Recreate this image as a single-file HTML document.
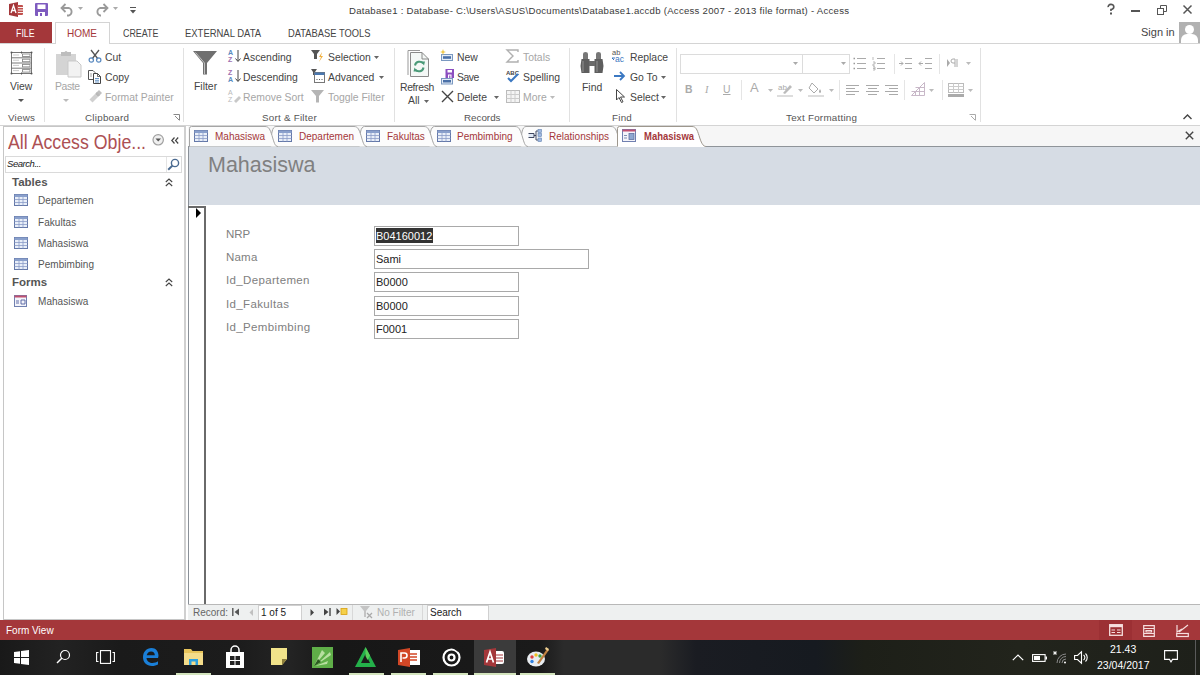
<!DOCTYPE html>
<html><head><meta charset="utf-8">
<style>
*{box-sizing:border-box}
html,body{margin:0;padding:0}
body{width:1200px;height:675px;position:relative;overflow:hidden;background:#fff;font-family:"Liberation Sans",sans-serif;color:#444}
.a{position:absolute;white-space:nowrap}
.t{position:absolute;white-space:nowrap;font-size:10.5px;line-height:12px;color:#444}
.dis{color:#a6a6a6}
.gl{position:absolute;font-size:9.8px;line-height:12px;color:#555;white-space:nowrap;letter-spacing:0.25px}
.sep{position:absolute;width:1px;background:#e1e1e1}
svg{position:absolute;overflow:visible}
</style></head><body>

<!-- ===== TITLE BAR ===== -->
<div id="titlebar" class="a" style="left:0;top:0;width:1200px;height:22px;background:#fff"></div>
<div class="t" style="left:349px;top:5px;font-size:9.6px;letter-spacing:0.26px;color:#3a3a3a">Database1 : Database- C:\Users\ASUS\Documents\Database1.accdb (Access 2007 - 2013 file format) - Access</div>


<svg style="left:9px;top:2px" width="15" height="15" viewBox="0 0 15 15">
 <path d="M0 2L9 0V15L0 13Z" fill="#a4373a"/>
 <rect x="8" y="3" width="6" height="10" rx="1" fill="#c0504d"/>
 <path d="M9 5.5H14M9 8H14M9 10.5H14" stroke="#fff" stroke-width="0.9"/>
 <path d="M2 11L4.5 3.5L7 11M3 8.5H6" stroke="#fff" stroke-width="1.3" fill="none"/>
</svg>
<svg style="left:35px;top:3px" width="13" height="13" viewBox="0 0 13 13">
 <rect x="0" y="0" width="13" height="13" rx="1" fill="#7e5bbf"/>
 <rect x="2.5" y="1.5" width="8" height="4.5" fill="#fff"/>
 <rect x="3" y="9" width="7" height="4" fill="#fff"/><rect x="5" y="10" width="2" height="3" fill="#7e5bbf"/>
</svg>
<svg style="left:60px;top:3px" width="14" height="13" viewBox="0 0 14 13">
 <path d="M2 5H9A4 4 0 0 1 9 12.5H7" fill="none" stroke="#9a9a9a" stroke-width="1.8"/>
 <path d="M5.5 1L1.5 5L5.5 9" fill="none" stroke="#9a9a9a" stroke-width="1.8"/>
</svg>
<svg style="left:78px;top:7px" width="5" height="3"><path d="M0 0H5L2.5 3Z" fill="#aaa"/></svg>
<svg style="left:95px;top:3px" width="14" height="13" viewBox="0 0 14 13">
 <path d="M12 5H5A4 4 0 0 0 5 12.5H6" fill="none" stroke="#9a9a9a" stroke-width="1.8"/>
 <path d="M8.5 1L12.5 5L8.5 9" fill="none" stroke="#9a9a9a" stroke-width="1.8"/>
</svg>
<svg style="left:113px;top:7px" width="5" height="3"><path d="M0 0H5L2.5 3Z" fill="#aaa"/></svg>
<svg style="left:130px;top:7px" width="6" height="7" viewBox="0 0 6 7"><path d="M0 0.5H6" stroke="#555"/><path d="M0 3H6L3 6.5Z" fill="#555"/></svg>

<svg style="left:1107px;top:4px" width="8" height="11" viewBox="0 0 8 11">
 <path d="M1.2 3.2A2.8 2.6 0 1 1 4 5.5V7" fill="none" stroke="#555" stroke-width="1.7"/><rect x="3" y="8.5" width="2" height="2" fill="#555"/>
</svg>
<div class="a" style="left:1131px;top:10px;width:9px;height:2px;background:#555"></div>
<svg style="left:1157px;top:5px" width="10" height="10" viewBox="0 0 10 10">
 <rect x="0.5" y="3.5" width="6" height="6" fill="none" stroke="#555"/><path d="M3.5 3.5V0.5H9.5V6.5H6.5" fill="none" stroke="#555"/>
</svg>
<svg style="left:1183px;top:5px" width="9" height="9" viewBox="0 0 9 9"><path d="M0.5 0.5L8.5 8.5M8.5 0.5L0.5 8.5" stroke="#555" stroke-width="1.5"/></svg>

<!-- ===== RIBBON TABS ===== -->
<div class="a" style="left:0;top:22px;width:52px;height:22px;background:#a4373a"></div>
<div class="t" style="left:16px;top:26px;color:#fff;font-size:11px;line-height:14px;transform:scaleX(0.8);transform-origin:0 0">FILE</div>
<div class="a" style="left:55px;top:22px;width:55px;height:22px;border:1px solid #d4d4d4;border-bottom:none;background:#fff"></div>
<div class="t" style="left:67px;top:26px;color:#a4373a;font-size:11px;line-height:14px;transform:scaleX(0.91);transform-origin:0 0">HOME</div>
<div class="t" style="left:123px;top:26px;font-size:11px;line-height:14px;transform:scaleX(0.81);transform-origin:0 0">CREATE</div>
<div class="t" style="left:184.5px;top:26px;font-size:11px;line-height:14px;transform:scaleX(0.86);transform-origin:0 0">EXTERNAL DATA</div>
<div class="t" style="left:287.5px;top:26px;font-size:11px;line-height:14px;transform:scaleX(0.85);transform-origin:0 0">DATABASE TOOLS</div>
<div class="t" style="left:1141px;top:26px;font-size:11px">Sign in</div>
<div class="a" style="left:1179px;top:22px;width:21px;height:21px;background:#b1b1b1;overflow:hidden">
  <div class="a" style="left:6px;top:3px;width:9px;height:9px;border-radius:50%;background:#fff"></div>
  <div class="a" style="left:2px;top:12px;width:17px;height:12px;border-radius:6px 6px 0 0;background:#fff"></div>
</div>
<div class="a" style="left:0;top:43px;width:1200px;height:1px;background:#d4d4d4"></div>
<div class="a" style="left:56px;top:43px;width:53px;height:1px;background:#fff"></div>

<!-- ===== RIBBON BODY ===== -->
<div class="a" style="left:0;top:125px;width:1200px;height:1px;background:#d4d4d4"></div>

<!-- group labels -->
<div class="gl" style="left:8px;top:112px">Views</div>
<div class="gl" style="left:85px;top:112px">Clipboard</div>
<div class="gl" style="left:262px;top:112px">Sort &amp; Filter</div>
<div class="gl" style="left:464px;top:112px;letter-spacing:0">Records</div>
<div class="gl" style="left:612px;top:112px">Find</div>
<div class="gl" style="left:786px;top:112px">Text Formatting</div>


<!-- Views -->
<svg style="left:10px;top:51px" width="23" height="24" viewBox="0 0 23 24">
 <g fill="none" stroke="#6a6a6a" stroke-width="0.9">
  <rect x="1.5" y="1.5" width="20" height="21"/>
  <line x1="1.5" y1="6.8" x2="21.5" y2="6.8"/><line x1="1.5" y1="12" x2="21.5" y2="12"/><line x1="1.5" y1="17.2" x2="21.5" y2="17.2"/>
  <line x1="11.5" y1="0.5" x2="11.5" y2="2.5"/><line x1="11.5" y1="21.5" x2="11.5" y2="23.5"/>
 </g>
 <g fill="none" stroke="#888" stroke-width="0.9">
  <rect x="12.5" y="3" width="7.5" height="2.5"/><rect x="12.5" y="8.2" width="7.5" height="2.5"/><rect x="12.5" y="13.4" width="7.5" height="2.5"/><rect x="12.5" y="18.6" width="7.5" height="2.5"/>
 </g>
 <g stroke="#c4c4c4" stroke-width="0.9"><line x1="3" y1="4" x2="9" y2="4"/><line x1="3" y1="9.2" x2="9" y2="9.2"/><line x1="3" y1="14.4" x2="9" y2="14.4"/><line x1="3" y1="19.6" x2="9" y2="19.6"/></g>
 <g fill="#555"><circle cx="1.5" cy="1.5" r="1"/><circle cx="21.5" cy="1.5" r="1"/><circle cx="1.5" cy="22.5" r="1"/><circle cx="21.5" cy="22.5" r="1"/><circle cx="11.5" cy="1.5" r="0.8"/><circle cx="11.5" cy="22.5" r="0.8"/></g>
</svg>
<div class="t" style="left:10px;top:81px;font-size:10.4px">View</div>
<svg style="left:18px;top:99px" width="6" height="4"><path d="M0 0H6L3 3Z" fill="#555"/></svg>

<!-- Clipboard -->
<svg style="left:56px;top:51px" width="26" height="27" viewBox="0 0 26 27">
 <rect x="0" y="3" width="20" height="21" fill="#d4d4d4"/>
 <rect x="5" y="1" width="10" height="4" fill="#bdbdbd"/><circle cx="10" cy="1.5" r="1.5" fill="#bdbdbd"/>
 <path d="M12 10H21L25 14V26H12Z" fill="#f2f2f2" stroke="#c9c9c9"/>
</svg>
<div class="t dis" style="left:55px;top:81px;font-size:10.4px;letter-spacing:-0.4px">Paste</div>
<svg style="left:63px;top:99px" width="6" height="4"><path d="M0 0H6L3 3Z" fill="#bbb"/></svg>

<svg style="left:88px;top:49px" width="14" height="14" viewBox="0 0 14 14">
 <path d="M3 1L10 10M11 1L4 10" stroke="#555" stroke-width="1.3" fill="none"/>
 <circle cx="3.3" cy="11" r="2.2" fill="none" stroke="#5a8ac0" stroke-width="1.2"/><circle cx="10.7" cy="11" r="2.2" fill="none" stroke="#5a8ac0" stroke-width="1.2"/>
</svg>
<div class="t" style="left:105px;top:52px;font-size:10.4px">Cut</div>
<svg style="left:88px;top:70px" width="14" height="14" viewBox="0 0 14 14">
 <path d="M0.5 0.5H5L7 2.5V9.5H0.5Z" fill="#fff" stroke="#555"/>
 <path d="M2 4H4M2 6H4" stroke="#888" stroke-width="0.8"/>
 <path d="M5.5 3.5H9.5L12.5 6.5V13.5H5.5Z" fill="#fff" stroke="#444"/>
 <path d="M9.5 3.5V6.5H12.5" fill="none" stroke="#444" stroke-width="0.8"/>
 <path d="M7 8.5H11M7 10.3H11M7 12H11" stroke="#5a8ac0" stroke-width="0.9"/>
</svg>
<div class="t" style="left:105px;top:72px;font-size:10.4px">Copy</div>
<svg style="left:89px;top:89px" width="14" height="14" viewBox="0 0 14 14">
 <path d="M0.5 10.5L6 5L9 8L3.5 13.5Z" fill="#d0d0d0"/><path d="M7 4L10 1L13 4L10 7Z" fill="#c0c0c0"/><path d="M6 5L8 3L11 6L9 8Z" fill="#b8b8b8"/>
</svg>
<div class="t dis" style="left:105px;top:92px;font-size:10.4px">Format Painter</div>
<svg style="left:173px;top:114px" width="7" height="7" viewBox="0 0 7 7"><path d="M0.5 0.5H6.5V6.5" fill="none" stroke="#888"/><path d="M2 2L6 6" stroke="#888"/></svg>

<!-- Sort & Filter -->
<svg style="left:193px;top:51px" width="25" height="24" viewBox="0 0 25 24">
 <path d="M0 0H24L14 12V23.5H10V12Z" fill="#6f6f6f"/>
 <path d="M2.5 1.5L11.5 12V23" stroke="#fff" stroke-width="0.8" fill="none" opacity="0.7"/>
</svg>
<div class="t" style="left:194px;top:81px;font-size:10.4px">Filter</div>

<svg style="left:228px;top:49px" width="14" height="14" viewBox="0 0 14 14">
 <text x="0" y="6" font-size="7" font-family="Liberation Sans" fill="#5a8ac0" font-weight="bold">A</text>
 <text x="0" y="13" font-size="7" font-family="Liberation Sans" fill="#a070b0" font-weight="bold">Z</text>
 <path d="M10 1V12M7.5 9.5L10 12.5L12.5 9.5" stroke="#444" fill="none"/>
</svg>
<div class="t" style="left:243px;top:52px;font-size:10.4px">Ascending</div>
<svg style="left:228px;top:69px" width="14" height="14" viewBox="0 0 14 14">
 <text x="0" y="6" font-size="7" font-family="Liberation Sans" fill="#a070b0" font-weight="bold">Z</text>
 <text x="0" y="13" font-size="7" font-family="Liberation Sans" fill="#5a8ac0" font-weight="bold">A</text>
 <path d="M10 1V12M7.5 9.5L10 12.5L12.5 9.5" stroke="#444" fill="none"/>
</svg>
<div class="t" style="left:243px;top:72px;font-size:10.4px">Descending</div>
<svg style="left:228px;top:89px" width="14" height="14" viewBox="0 0 14 14">
 <text x="0" y="6" font-size="7" font-family="Liberation Sans" fill="#bbb">A</text>
 <text x="0" y="13" font-size="7" font-family="Liberation Sans" fill="#bbb">Z</text>
 <path d="M6 12L11 7L13 9L8 14Z" fill="#c8c8c8"/>
</svg>
<div class="t dis" style="left:243px;top:92px;font-size:10.4px">Remove Sort</div>

<svg style="left:311px;top:50px" width="14" height="14" viewBox="0 0 14 14">
 <path d="M0 0H9L6 4V9H3V4Z" fill="#555"/>
 <path d="M11 2L8 7H10L8 12L12 6H10Z" fill="#f0b040"/>
</svg>
<div class="t" style="left:328px;top:52px;font-size:10.4px">Selection</div>
<svg style="left:374px;top:56px" width="5" height="3"><path d="M0 0H5L2.5 3Z" fill="#666"/></svg>
<svg style="left:311px;top:69px" width="14" height="14" viewBox="0 0 14 14">
 <path d="M0 0H6L4 3V6H2V3Z" fill="#555"/>
 <rect x="3.5" y="3.5" width="10" height="10" fill="#fff" stroke="#777"/>
 <rect x="3.5" y="3.5" width="10" height="2.5" fill="#4a78b0"/>
 <path d="M5.5 10.5H6.5M8 10.5H9M10.5 10.5H11.5" stroke="#555"/>
</svg>
<div class="t" style="left:328px;top:72px;font-size:10.4px">Advanced</div>
<svg style="left:379px;top:76px" width="5" height="3"><path d="M0 0H5L2.5 3Z" fill="#666"/></svg>
<svg style="left:311px;top:90px" width="14" height="13" viewBox="0 0 14 13">
 <path d="M0 0H13L8 6V12.5H5V6Z" fill="#b5b5b5"/>
</svg>
<div class="t dis" style="left:328px;top:92px;font-size:10.4px">Toggle Filter</div>

<!-- Records -->
<svg style="left:407px;top:50px" width="23" height="27" viewBox="0 0 23 27">
 <path d="M1 25V0.5H13" fill="none" stroke="#999" stroke-width="1"/>
 <path d="M3.5 2.5H15L21.5 9V26.5H3.5Z" fill="#f4f8f6" stroke="#8a8a8a"/>
 <path d="M15 2.5V9H21.5" fill="none" stroke="#8a8a8a"/>
 <path d="M8 15.5A4.6 4.6 0 0 1 16.2 13.5M16.5 17.5A4.6 4.6 0 0 1 8.3 19.5" fill="none" stroke="#4a9a78" stroke-width="2"/>
 <path d="M14 11.5L18 11.5L17 15.5Z M10.5 21.5L6.5 21.5L7.5 17.5Z" fill="#4a9a78"/>
</svg>
<div class="t" style="left:400px;top:82px;font-size:10.4px;letter-spacing:-0.35px">Refresh</div>
<div class="t" style="left:408px;top:95px;font-size:10.4px">All</div>
<svg style="left:424px;top:100px" width="5" height="3"><path d="M0 0H5L2.5 3Z" fill="#666"/></svg>

<svg style="left:440px;top:49px" width="16" height="14" viewBox="0 0 16 14">
 <rect x="1.5" y="5.5" width="11" height="6" fill="#e4ecf6" stroke="#7a98c0"/>
 <rect x="3" y="7.2" width="8" height="2.6" fill="#4a70a8"/>
 <path d="M3 0L3.8 2.2L6 3L3.8 3.8L3 6L2.2 3.8L0 3L2.2 2.2Z" fill="#f0c848"/>
</svg>
<div class="t" style="left:457px;top:52px;font-size:10.4px">New</div>
<svg style="left:441px;top:69px" width="15" height="16" viewBox="0 0 15 16">
 <rect x="0.5" y="9.5" width="11" height="5.5" fill="#e4ecf6" stroke="#7a98c0"/>
 <rect x="2" y="11" width="8" height="2.5" fill="#4a70a8"/>
 <rect x="4.5" y="0" width="8.5" height="9" fill="#8c4fc0"/>
 <rect x="6.5" y="1" width="4.5" height="2.5" fill="#fff"/><rect x="7" y="5.5" width="3.5" height="3.5" fill="#fff"/><rect x="8.2" y="6.5" width="1.2" height="2.5" fill="#8c4fc0"/>
</svg>
<div class="t" style="left:457px;top:72px;font-size:10.4px;letter-spacing:-0.5px">Save</div>
<svg style="left:441px;top:90px" width="13" height="13" viewBox="0 0 13 13">
 <path d="M1 1L12 12M12 1L1 12" stroke="#444" stroke-width="1.4"/>
</svg>
<div class="t" style="left:457px;top:92px;font-size:10.4px">Delete</div>
<svg style="left:494px;top:96px" width="5" height="3"><path d="M0 0H5L2.5 3Z" fill="#666"/></svg>

<svg style="left:506px;top:49px" width="13" height="14" viewBox="0 0 13 14">
 <path d="M12 3V1H1L7 7L1 13H12V11" fill="none" stroke="#b0b0b0" stroke-width="1.4"/>
</svg>
<div class="t dis" style="left:523px;top:52px;font-size:10.4px">Totals</div>
<svg style="left:506px;top:69px" width="14" height="14" viewBox="0 0 14 14">
 <text x="0" y="6" font-size="6" font-family="Liberation Sans" font-weight="bold" fill="#444">ABC</text>
 <path d="M2 9L5 12L12 5" stroke="#3b78c2" stroke-width="2" fill="none"/>
</svg>
<div class="t" style="left:523px;top:72px;font-size:10.4px">Spelling</div>
<svg style="left:506px;top:90px" width="14" height="13" viewBox="0 0 14 13">
 <rect x="0.5" y="0.5" width="13" height="12" fill="#f4f4f4" stroke="#bbb"/>
 <path d="M0.5 4.5H13.5M0.5 8.5H13.5M5 0.5V12.5M9 0.5V12.5" stroke="#ccc"/>
</svg>
<div class="t dis" style="left:523px;top:92px;font-size:10.4px">More</div>
<svg style="left:550px;top:96px" width="5" height="3"><path d="M0 0H5L2.5 3Z" fill="#bbb"/></svg>

<!-- Find -->
<svg style="left:580px;top:52px" width="24" height="22" viewBox="0 0 24 22">
 <path d="M3 2Q3 0 5.5 0Q8 0 8 2V7H3Z M16 2Q16 0 18.5 0Q21 0 21 2V7H16Z" fill="#777"/>
 <path d="M1.5 7H9.5V9H10V14H9.5V21H1.5L0.5 14Z M14.5 7H22.5L23.5 14L22.5 21H14.5V14H14V9H14.5Z" fill="#5e5e5e"/>
 <rect x="9" y="9" width="6" height="5" fill="#6a6a6a"/>
 <path d="M3 9V20M17 9V20" stroke="#8a8a8a" stroke-width="1.2"/>
</svg>
<div class="t" style="left:582px;top:82px;font-size:10.4px">Find</div>

<svg style="left:612px;top:49px" width="15" height="14" viewBox="0 0 15 14">
 <text x="0" y="6" font-size="7.5" font-family="Liberation Sans" fill="#555">ab</text>
 <text x="3" y="13" font-size="8.5" font-family="Liberation Sans" fill="#3b78c2">ac</text>
 <path d="M0 9L2 11M0 9H3" stroke="#3b78c2"/>
</svg>
<div class="t" style="left:630px;top:52px;font-size:10.4px">Replace</div>
<svg style="left:614px;top:71px" width="12" height="10" viewBox="0 0 12 10">
 <path d="M0 5H10M6 1L10 5L6 9" stroke="#3b78c2" stroke-width="1.8" fill="none"/>
</svg>
<div class="t" style="left:630px;top:72px;font-size:10.4px">Go To</div>
<svg style="left:661px;top:76px" width="5" height="3"><path d="M0 0H5L2.5 3Z" fill="#666"/></svg>
<svg style="left:616px;top:89px" width="10" height="14" viewBox="0 0 10 14">
 <path d="M0.5 0.5V11L3 8.5L5.5 13.5L7 12.8L4.5 8H8.5Z" fill="#fff" stroke="#444"/>
</svg>
<div class="t" style="left:630px;top:92px;font-size:10.4px">Select</div>
<svg style="left:661px;top:96px" width="5" height="3"><path d="M0 0H5L2.5 3Z" fill="#666"/></svg>

<!-- Text Formatting -->
<div class="a" style="left:680px;top:54px;width:123px;height:20px;border:1px solid #dcdcdc;background:#fff"></div>
<div class="a" style="left:802px;top:54px;width:48px;height:20px;border:1px solid #dcdcdc;background:#fff"></div>
<svg style="left:793px;top:62px" width="5" height="3"><path d="M0 0H5L2.5 3Z" fill="#aaa"/></svg>
<svg style="left:841px;top:62px" width="5" height="3"><path d="M0 0H5L2.5 3Z" fill="#aaa"/></svg>
<svg style="left:853px;top:57px" width="14" height="13" viewBox="0 0 14 13">
 <path d="M4 1.5H13M4 6.5H13M4 11.5H13" stroke="#aaa"/><path d="M0.5 1.5H2M0.5 6.5H2M0.5 11.5H2" stroke="#999" stroke-width="1.5"/>
</svg>
<svg style="left:872px;top:57px" width="14" height="13" viewBox="0 0 14 13">
 <path d="M5 1.5H13M5 6.5H13M5 11.5H13" stroke="#aaa"/><path d="M1 0V3M1 5H3V7H1V9H3M1 10H3V13H1M1 11.5H3" stroke="#aaa" stroke-width="0.8" fill="none"/>
</svg>
<div class="sep" style="left:894px;top:54px;height:20px;background:#e5e5e5"></div>
<svg style="left:899px;top:57px" width="14" height="13" viewBox="0 0 14 13">
 <path d="M6 1.5H13M6 6.5H13M6 11.5H13M0 6.5H4M2 4.5L4 6.5L2 8.5" stroke="#aaa" fill="none"/>
</svg>
<svg style="left:919px;top:57px" width="14" height="13" viewBox="0 0 14 13">
 <path d="M6 1.5H13M6 6.5H13M6 11.5H13M0 6.5H4M2 4.5L0 6.5L2 8.5" stroke="#aaa" fill="none"/>
</svg>
<div class="sep" style="left:939px;top:54px;height:20px;background:#e5e5e5"></div>
<svg style="left:947px;top:58px" width="12" height="10" viewBox="0 0 12 10">
 <path d="M0 1V9L3 5Z" fill="#aaa"/><path d="M8 1V9M10 1V9M8 1H6A2 2 0 0 0 6 5H8" stroke="#aaa" fill="none"/>
</svg>
<svg style="left:966px;top:62px" width="5" height="3"><path d="M0 0H5L2.5 3Z" fill="#bbb"/></svg>

<div class="t" style="left:685px;top:84px;font-size:10.4px;font-weight:bold;color:#aaa">B</div>
<div class="t" style="left:705px;top:84px;font-size:10.4px;font-style:italic;color:#aaa;font-family:'Liberation Serif'">I</div>
<div class="t" style="left:723px;top:84px;font-size:10.4px;text-decoration:underline;color:#aaa">U</div>
<div class="sep" style="left:741px;top:80px;height:20px;background:#e5e5e5"></div>
<div class="t" style="left:750px;top:82px;font-size:13px;color:#aaa">A</div>
<svg style="left:768px;top:89px" width="5" height="3"><path d="M0 0H5L2.5 3Z" fill="#bbb"/></svg>
<svg style="left:777px;top:82px" width="17" height="16" viewBox="0 0 17 16">
 <text x="1" y="8" font-size="8" font-family="Liberation Sans" fill="#aaa">ab</text>
 <path d="M6 11L13 3L15 5L8 12Z" fill="#bbb"/><rect x="0" y="13" width="16" height="2" fill="#ddd"/>
</svg>
<svg style="left:798px;top:89px" width="5" height="3"><path d="M0 0H5L2.5 3Z" fill="#bbb"/></svg>
<svg style="left:808px;top:82px" width="17" height="16" viewBox="0 0 17 16">
 <path d="M4 1L10 7L6 11L1 6Z" fill="none" stroke="#aaa"/><path d="M12 7Q14 10 12 11Q10 10 12 7Z" fill="#aaa"/><rect x="0" y="13" width="16" height="2" fill="#ddd"/>
</svg>
<svg style="left:829px;top:89px" width="5" height="3"><path d="M0 0H5L2.5 3Z" fill="#bbb"/></svg>
<div class="sep" style="left:839px;top:80px;height:20px;background:#e5e5e5"></div>
<svg style="left:846px;top:84px" width="14" height="12" viewBox="0 0 14 12">
 <path d="M0 1.5H13M0 4.5H9M0 7.5H13M0 10.5H9" stroke="#aaa"/>
</svg>
<svg style="left:866px;top:84px" width="14" height="12" viewBox="0 0 14 12">
 <path d="M0 1.5H13M2 4.5H11M0 7.5H13M2 10.5H11" stroke="#aaa"/>
</svg>
<svg style="left:885px;top:84px" width="14" height="12" viewBox="0 0 14 12">
 <path d="M0 1.5H13M4 4.5H13M0 7.5H13M4 10.5H13" stroke="#aaa"/>
</svg>
<div class="sep" style="left:904px;top:80px;height:20px;background:#e5e5e5"></div>
<svg style="left:911px;top:82px" width="14" height="14" viewBox="0 0 14 14">
 <path d="M0.5 13.5H13.5V0.5Z" fill="none" stroke="#c8b8c8"/><path d="M4.5 13.5V9M8.5 13.5V5M0.5 9.5H13.5M4.5 5.5H13.5" stroke="#c8b8c8" fill="none"/>
</svg>
<svg style="left:929px;top:89px" width="5" height="3"><path d="M0 0H5L2.5 3Z" fill="#bbb"/></svg>
<div class="sep" style="left:942px;top:80px;height:20px;background:#e5e5e5"></div>
<svg style="left:948px;top:83px" width="16" height="15" viewBox="0 0 16 15">
 <rect x="0.5" y="0.5" width="15" height="9" fill="#fff" stroke="#bbb"/><path d="M0.5 3.5H15.5M0.5 6.5H15.5M5.5 0.5V9.5M10.5 0.5V9.5" stroke="#ccc"/><rect x="0" y="11" width="16" height="3" fill="#aaa"/>
</svg>
<svg style="left:968px;top:89px" width="5" height="3"><path d="M0 0H5L2.5 3Z" fill="#bbb"/></svg>
<svg style="left:969px;top:114px" width="7" height="7" viewBox="0 0 7 7"><path d="M0.5 0.5H6.5V6.5" fill="none" stroke="#aaa"/><path d="M2 2L6 6" stroke="#aaa"/></svg>

<svg style="left:1183px;top:114px" width="9" height="6" viewBox="0 0 9 6"><path d="M0.5 5L4.5 1L8.5 5" fill="none" stroke="#444" stroke-width="1.4"/></svg>

<!-- separators -->
<div class="sep" style="left:44px;top:48px;height:74px"></div>
<div class="sep" style="left:183px;top:48px;height:74px"></div>
<div class="sep" style="left:394px;top:48px;height:74px"></div>
<div class="sep" style="left:569px;top:48px;height:74px"></div>
<div class="sep" style="left:676px;top:48px;height:74px"></div>
<div class="sep" style="left:980px;top:48px;height:74px"></div>

<!-- ===== NAV PANE ===== -->
<div class="a" style="left:3px;top:126px;width:183px;height:494px;border:1px solid #c6c6c6;border-right:2px solid #d0d0d0;background:#fff"></div>
<div class="a" style="left:8px;top:131px;font-size:20px;line-height:23px;color:#ad5053;transform:scaleX(0.887);transform-origin:0 0">All Access Obje...</div>
<svg style="left:152px;top:134px" width="13" height="12" viewBox="0 0 13 12">
 <circle cx="6.2" cy="5.8" r="5.2" fill="#f0f0f0" stroke="#a0a0a0" stroke-width="1.2"/><path d="M3.5 4.5H9L6.2 7.5Z" fill="#555"/>
</svg>
<svg style="left:171px;top:137px" width="8" height="7" viewBox="0 0 8 7"><path d="M3.5 0.5L0.8 3.5L3.5 6.5M7.2 0.5L4.5 3.5L7.2 6.5" fill="none" stroke="#444" stroke-width="1.2"/></svg>
<div class="a" style="left:5px;top:156px;width:177px;height:17px;border:1px solid #dadada;background:#fff"></div>
<div class="a" style="left:166px;top:157px;width:1px;height:15px;background:#e4e4e4"></div>
<div class="a" style="left:7px;top:158px;font-size:9.5px;line-height:12px;font-style:italic;color:#222;letter-spacing:-0.45px">Search...</div>
<svg style="left:167px;top:158px" width="13" height="13" viewBox="0 0 13 13"><circle cx="8" cy="5" r="3.6" fill="none" stroke="#4a6a90" stroke-width="1.4"/><path d="M5.4 7.6L1.2 11.8" stroke="#4a6a90" stroke-width="2"/></svg>

<div class="a" style="left:12px;top:176px;font-size:11.5px;line-height:13px;font-weight:bold;color:#555">Tables</div>
<svg style="left:165px;top:178px" width="8" height="9" viewBox="0 0 8 9"><path d="M0.8 4L4 1L7.2 4M0.8 8L4 5L7.2 8" fill="none" stroke="#444" stroke-width="1.1"/></svg>
<div class="a" style="left:12px;top:276px;font-size:11.5px;line-height:13px;font-weight:bold;color:#555">Forms</div>
<svg style="left:165px;top:278px" width="8" height="9" viewBox="0 0 8 9"><path d="M0.8 4L4 1L7.2 4M0.8 8L4 5L7.2 8" fill="none" stroke="#444" stroke-width="1.1"/></svg>
<svg style="left:14px;top:194px" width="14" height="12" viewBox="0 0 14 12"><rect x="0.5" y="0.5" width="13" height="11" fill="#e8eef8" stroke="#6478a8"/><rect x="0.5" y="0.5" width="13" height="2.5" fill="#8aa0cc"/><path d="M0.5 5.5H13.5M0.5 8.5H13.5M5 3V11.5M9 3V11.5" stroke="#8a9cc8" stroke-width="0.8"/></svg>
<div class="a" style="left:38px;top:195px;font-size:10px;line-height:12px;color:#555;letter-spacing:0.05px">Departemen</div>
<svg style="left:14px;top:216px" width="14" height="12" viewBox="0 0 14 12"><rect x="0.5" y="0.5" width="13" height="11" fill="#e8eef8" stroke="#6478a8"/><rect x="0.5" y="0.5" width="13" height="2.5" fill="#8aa0cc"/><path d="M0.5 5.5H13.5M0.5 8.5H13.5M5 3V11.5M9 3V11.5" stroke="#8a9cc8" stroke-width="0.8"/></svg>
<div class="a" style="left:38px;top:217px;font-size:10px;line-height:12px;color:#555;letter-spacing:0.05px">Fakultas</div>
<svg style="left:14px;top:237px" width="14" height="12" viewBox="0 0 14 12"><rect x="0.5" y="0.5" width="13" height="11" fill="#e8eef8" stroke="#6478a8"/><rect x="0.5" y="0.5" width="13" height="2.5" fill="#8aa0cc"/><path d="M0.5 5.5H13.5M0.5 8.5H13.5M5 3V11.5M9 3V11.5" stroke="#8a9cc8" stroke-width="0.8"/></svg>
<div class="a" style="left:38px;top:238px;font-size:10px;line-height:12px;color:#555;letter-spacing:0.05px">Mahasiswa</div>
<svg style="left:14px;top:258px" width="14" height="12" viewBox="0 0 14 12"><rect x="0.5" y="0.5" width="13" height="11" fill="#e8eef8" stroke="#6478a8"/><rect x="0.5" y="0.5" width="13" height="2.5" fill="#8aa0cc"/><path d="M0.5 5.5H13.5M0.5 8.5H13.5M5 3V11.5M9 3V11.5" stroke="#8a9cc8" stroke-width="0.8"/></svg>
<div class="a" style="left:38px;top:259px;font-size:10px;line-height:12px;color:#555;letter-spacing:0.05px">Pembimbing</div>
<svg style="left:14px;top:295px" width="13" height="12" viewBox="0 0 13 12"><rect x="0.5" y="0.5" width="12" height="11" fill="#f4f4fa" stroke="#7080b0"/><rect x="0.5" y="0.5" width="12" height="2" fill="#c05070"/><path d="M2 6H5M7 5H11V9H7ZM2 8H5" stroke="#5060a0" fill="none" stroke-width="0.9"/></svg>
<div class="a" style="left:38px;top:296px;font-size:10px;line-height:12px;color:#555;letter-spacing:0.05px">Mahasiswa</div>


<!-- ===== DOCUMENT AREA ===== -->
<svg style="left:188px;top:124px" width="1012" height="24" viewBox="0 0 1012 24">
<rect x="0" y="2" width="1012" height="21" fill="#f6f6f6"/>
<rect x="0" y="22" width="1012" height="1" fill="#8f9499"/>
<path d="M333,22.5 C333,10.5 334,2.5 338,2.5 H423 C427,2.5 428,5.5 430,11.5 C432,18.5 433,22.5 436,22.5" fill="#fcfcfc" stroke="#a5a5a5" stroke-width="1"/><path d="M241.5,22.5 C241.5,10.5 242.5,2.5 246.5,2.5 H327 C331,2.5 332,5.5 334,11.5 C336,18.5 337,22.5 340,22.5" fill="#fcfcfc" stroke="#a5a5a5" stroke-width="1"/><path d="M171.5,22.5 C171.5,10.5 172.5,2.5 176.5,2.5 H236 C240,2.5 241,5.5 243,11.5 C245,18.5 246,22.5 249,22.5" fill="#fcfcfc" stroke="#a5a5a5" stroke-width="1"/><path d="M83,22.5 C83,10.5 84,2.5 88,2.5 H166 C170,2.5 171,5.5 173,11.5 C175,18.5 176,22.5 179,22.5" fill="#fcfcfc" stroke="#a5a5a5" stroke-width="1"/><path d="M1.5,22.5 V4.5 Q1.5,2.5 3.5,2.5 H77 C81,2.5 82,5.5 84,11.5 C86,18.5 87,22.5 90,22.5" fill="#fcfcfc" stroke="#a5a5a5" stroke-width="1"/>
<rect x="429.5" y="22" width="88.5" height="1" fill="#fff"/>
<path d="M429.5,22.5 V4.5 Q429.5,2.5 431.5,2.5 H504 C508,2.5 509,5.5 511,11.5 C513,18.5 515,22.5 518,22.5" fill="#ffffff" stroke="#9d978d" stroke-width="1"/>
</svg>
<svg style="left:194px;top:130px" width="14" height="12" viewBox="0 0 14 12"><rect x="0.5" y="0.5" width="13" height="11" fill="#e8eef8" stroke="#6478a8"/><rect x="0.5" y="0.5" width="13" height="2.5" fill="#8aa0cc"/><path d="M0.5 5.5H13.5M0.5 8.5H13.5M5 3V11.5M9 3V11.5" stroke="#8a9cc8" stroke-width="0.8"/></svg>
<div class="a" style="left:215px;top:131px;font-size:10px;line-height:12px;color:#a4373a">Mahasiswa</div>
<svg style="left:278px;top:130px" width="14" height="12" viewBox="0 0 14 12"><rect x="0.5" y="0.5" width="13" height="11" fill="#e8eef8" stroke="#6478a8"/><rect x="0.5" y="0.5" width="13" height="2.5" fill="#8aa0cc"/><path d="M0.5 5.5H13.5M0.5 8.5H13.5M5 3V11.5M9 3V11.5" stroke="#8a9cc8" stroke-width="0.8"/></svg>
<div class="a" style="left:299px;top:131px;font-size:10px;line-height:12px;color:#a4373a">Departemen</div>
<svg style="left:366px;top:130px" width="14" height="12" viewBox="0 0 14 12"><rect x="0.5" y="0.5" width="13" height="11" fill="#e8eef8" stroke="#6478a8"/><rect x="0.5" y="0.5" width="13" height="2.5" fill="#8aa0cc"/><path d="M0.5 5.5H13.5M0.5 8.5H13.5M5 3V11.5M9 3V11.5" stroke="#8a9cc8" stroke-width="0.8"/></svg>
<div class="a" style="left:387px;top:131px;font-size:10px;line-height:12px;color:#a4373a">Fakultas</div>
<svg style="left:437px;top:130px" width="14" height="12" viewBox="0 0 14 12"><rect x="0.5" y="0.5" width="13" height="11" fill="#e8eef8" stroke="#6478a8"/><rect x="0.5" y="0.5" width="13" height="2.5" fill="#8aa0cc"/><path d="M0.5 5.5H13.5M0.5 8.5H13.5M5 3V11.5M9 3V11.5" stroke="#8a9cc8" stroke-width="0.8"/></svg>
<div class="a" style="left:457px;top:131px;font-size:10px;line-height:12px;color:#a4373a">Pembimbing</div>
<svg style="left:528px;top:129px" width="14" height="13" viewBox="0 0 14 13"><path d="M0.5 4.5H6V8.5H0.5" fill="#e0e8f4" stroke="#404860"/><path d="M6 6.5H8M8 2V11M8 2H10M8 11H10" stroke="#404860" fill="none"/><rect x="10" y="0.5" width="3.5" height="3" fill="#a0b8e0" stroke="#6080b0" stroke-width="0.6"/><rect x="10" y="4.5" width="3.5" height="3" fill="#a0b8e0" stroke="#6080b0" stroke-width="0.6"/><rect x="10" y="9" width="3.5" height="3.5" fill="#a0b8e0" stroke="#6080b0" stroke-width="0.6"/></svg>
<div class="a" style="left:549px;top:131px;font-size:10px;line-height:12px;color:#a4373a">Relationships</div>
<svg style="left:622px;top:129px" width="14" height="13" viewBox="0 0 14 13"><rect x="0.5" y="0.5" width="13" height="12" fill="#f4f4fa" stroke="#7080b0"/><rect x="0.5" y="0.5" width="13" height="2" fill="#c05070"/><path d="M2 6.5H5M2 9H5" stroke="#8090b0"/><rect x="7" y="4.5" width="5" height="6" fill="#90a8d0" stroke="#6070a0" stroke-width="0.8"/></svg>
<div class="a" style="left:643.5px;top:131px;font-size:10.3px;line-height:12px;color:#a4373a;font-weight:bold;transform:scaleX(0.92);transform-origin:0 0">Mahasiswa</div>
<svg style="left:1185px;top:131px" width="9" height="9" viewBox="0 0 9 9"><path d="M0.8 0.8L8.2 8.2M8.2 0.8L0.8 8.2" stroke="#444" stroke-width="1.4"/></svg>

<div class="a" style="left:188px;top:147px;width:1012px;height:58px;background:#d6dce4"></div>
<div class="a" style="left:208px;top:152px;font-size:21.5px;line-height:26px;color:#808080">Mahasiswa</div>

<!-- doc left border -->
<div class="a" style="left:188px;top:147px;width:1px;height:473px;background:#8a9098"></div>
<!-- record selector -->
<div class="a" style="left:188px;top:206px;width:18px;height:398px;border-top:2px solid #6a6a6a;border-right:2px solid #6a6a6a"></div>
<svg style="left:196px;top:208px" width="5" height="10" viewBox="0 0 5 10"><path d="M0 0L5 5L0 10Z" fill="#000"/></svg>
<!-- fields -->
<div class="a" style="left:226px;top:227px;font-size:11.5px;line-height:14px;color:#808080">NRP</div>
<div class="a" style="left:226px;top:250px;font-size:11.5px;line-height:14px;color:#808080;letter-spacing:0.2px">Nama</div>
<div class="a" style="left:226px;top:273px;font-size:11.5px;line-height:14px;color:#808080;letter-spacing:0.35px">Id_Departemen</div>
<div class="a" style="left:226px;top:297px;font-size:11.5px;line-height:14px;color:#808080;letter-spacing:0.35px">Id_Fakultas</div>
<div class="a" style="left:226px;top:320px;font-size:11.5px;line-height:14px;color:#808080;letter-spacing:0.35px">Id_Pembimbing</div>

<div class="a" style="left:374px;top:226px;width:145px;height:20px;border:1px solid #a9a9a9;background:#fff"></div>
<div class="a" style="left:376px;top:228px;width:57px;height:15px;background:#333"></div>
<div class="a" style="left:376px;top:229px;font-size:11px;line-height:14px;color:#fff">B04160012</div>
<div class="a" style="left:374px;top:249px;width:215px;height:20px;border:1px solid #a9a9a9;background:#fff"></div>
<div class="a" style="left:376px;top:252px;font-size:11px;line-height:14px;color:#222">Sami</div>
<div class="a" style="left:374px;top:272px;width:145px;height:20px;border:1px solid #a9a9a9;background:#fff"></div>
<div class="a" style="left:376px;top:275px;font-size:11px;line-height:14px;color:#222">B0000</div>
<div class="a" style="left:374px;top:296px;width:145px;height:20px;border:1px solid #a9a9a9;background:#fff"></div>
<div class="a" style="left:376px;top:299px;font-size:11px;line-height:14px;color:#222">B0000</div>
<div class="a" style="left:374px;top:319px;width:145px;height:20px;border:1px solid #a9a9a9;background:#fff"></div>
<div class="a" style="left:376px;top:322px;font-size:11px;line-height:14px;color:#222">F0001</div>

<!-- record nav -->
<div class="a" style="left:188px;top:604px;width:1012px;height:16px;background:#eef0f0;border-top:1px solid #b8b8b8"></div>
<div class="a" style="left:193px;top:607px;font-size:10px;line-height:12px;color:#666">Record:</div>
<svg style="left:232px;top:608px" width="8" height="8" viewBox="0 0 8 8"><path d="M0.8 0V8" stroke="#555" stroke-width="1.4"/><path d="M7 0.5V7.5L2.5 4Z" fill="#555"/></svg>
<svg style="left:249px;top:609px" width="5" height="7" viewBox="0 0 5 7"><path d="M4 0V7L0.5 3.5Z" fill="#c0c0c0"/></svg>
<div class="a" style="left:258px;top:605px;width:44px;height:15px;background:#fff;border:1px solid #d0d0d0;border-bottom:none"></div>
<div class="a" style="left:261px;top:607px;font-size:10px;line-height:12px;color:#222">1 of 5</div>
<svg style="left:310px;top:609px" width="5" height="7" viewBox="0 0 5 7"><path d="M0.5 0V7L4 3.5Z" fill="#444"/></svg>
<svg style="left:323px;top:608px" width="8" height="8" viewBox="0 0 8 8"><path d="M1 0.5V7.5L5.5 4Z" fill="#444"/><path d="M7 0V8" stroke="#444" stroke-width="1.4"/></svg>
<svg style="left:336px;top:607px" width="12" height="9" viewBox="0 0 12 9"><path d="M0.5 1V8L4 4.5Z" fill="#444"/><rect x="5" y="1.5" width="6" height="6" fill="#f5d04a" stroke="#d8a010" stroke-width="0.8"/></svg>
<div class="a" style="left:352px;top:605px;width:1px;height:15px;background:#d8d8d8"></div>
<svg style="left:360px;top:606px" width="14" height="13" viewBox="0 0 14 13"><path d="M0 0H10L6 5V11H4V5Z" fill="#c4c4c4"/><path d="M7 7L12 12M12 7L7 12" stroke="#aaa" stroke-width="1.3"/></svg>
<div class="a" style="left:377px;top:607px;font-size:10px;line-height:12px;color:#b0b0b0">No Filter</div>
<div class="a" style="left:422px;top:605px;width:1px;height:15px;background:#d8d8d8"></div>
<div class="a" style="left:427px;top:605px;width:62px;height:15px;background:#fff;border:1px solid #d0d0d0;border-bottom:none"></div>
<div class="a" style="left:430px;top:607px;font-size:10px;line-height:12px;color:#222">Search</div>

<!-- ===== STATUS BAR ===== -->
<div class="a" style="left:0;top:620px;width:1200px;height:20px;background:#a4373a"></div>
<div class="t" style="left:6px;top:625px;color:#fff;font-size:10px">Form View</div>
<div class="a" style="left:1099px;top:620px;width:33px;height:20px;background:#9c3034"></div>
<svg style="left:1109px;top:624px" width="14" height="12" viewBox="0 0 14 12"><rect x="0.7" y="0.7" width="12.6" height="10.6" fill="none" stroke="#f6dede" stroke-width="1.3"/><rect x="0.7" y="0.7" width="12.6" height="2.5" fill="#f6dede"/><path d="M2.5 6H6M2.5 8.5H6M8 6H11.5M8 8.5H11.5" stroke="#f6dede" stroke-width="1.2"/></svg>
<svg style="left:1143px;top:625px" width="12" height="12" viewBox="0 0 12 12"><path d="M0.7 0.7H11.3V11.3H0.7Z M0.7 3.5H11.3M0.7 8.5H11.3M3 5.5H8.5V7H3Z" fill="none" stroke="#f6dede" stroke-width="1.2"/></svg>
<svg style="left:1176px;top:624px" width="13" height="13" viewBox="0 0 13 13"><path d="M1 1V8L6 5M3 8L12 1" fill="none" stroke="#f6dede" stroke-width="1.2"/><rect x="0.7" y="9.5" width="11.6" height="3" fill="none" stroke="#f6dede" stroke-width="1.2"/></svg>

<!-- ===== TASKBAR ===== -->
<div class="a" style="left:0;top:640px;width:1200px;height:35px;background:linear-gradient(90deg,#191919 0%,#222 5%,#1a1a1a 10%,#1c1c1c 20%,#242424 24%,#171717 28%,#1a1a1a 45%,#2b2b2b 47%,#2b2b2b 55%,#1a1c22 58%,#161a20 68%,#1d1f18 72%,#22241c 85%,#1e201a 100%)"></div>
<div class="a" style="left:474px;top:640px;width:42px;height:35px;background:#3b3b3b"></div>
<!-- windows -->
<svg style="left:14px;top:650px" width="15" height="15" viewBox="0 0 15 15"><path d="M0 2L6 1.2V7H0Z M7 1L15 0V7H7Z M0 8H6V13.8L0 13Z M7 8H15V15L7 14Z" fill="#fff"/></svg>
<svg style="left:56px;top:649px" width="15" height="15" viewBox="0 0 15 15"><circle cx="9" cy="6" r="4.5" fill="none" stroke="#fff" stroke-width="1.2"/><path d="M6 9L1 14" stroke="#fff" stroke-width="1.4"/></svg>
<svg style="left:96px;top:650px" width="19" height="14" viewBox="0 0 19 14"><rect x="4.5" y="0.6" width="10" height="12.8" fill="none" stroke="#fff" stroke-width="1.1"/><path d="M2.5 2.5H0.6V11.5H2.5M16.5 2.5H18.4V11.5H16.5" fill="none" stroke="#fff" stroke-width="1.1"/></svg>
<!-- edge -->
<svg style="left:142px;top:648px" width="17" height="18" viewBox="0 0 17 18"><path d="M16 10H4.5C4.8 13.5 7.5 15 10.5 15C12.5 15 14.5 14.3 16 13.3V16.5C14.5 17.4 12.3 18 10 18C4.5 18 1 14.5 1 9.3C1 4 4.5 0 9.5 0C14 0 16.5 3.5 16.5 8ZM4.7 7.3H12.8C12.8 5 11.5 3.5 9 3.5C6.8 3.5 5.3 5 4.7 7.3Z" fill="#1a7fd8"/></svg>
<!-- explorer -->
<svg style="left:184px;top:648px" width="19" height="17" viewBox="0 0 19 17"><path d="M0 1H7L8.5 3H19V17H0Z" fill="#e8c45a"/><path d="M0 5H19V17H0Z" fill="#f4dc8a"/><path d="M5 11H14V17H11.5V13.5H7.5V17H5Z" fill="#2aa0e0"/></svg>
<!-- store -->
<svg style="left:226px;top:647px" width="18" height="21" viewBox="0 0 18 21"><path d="M5 5V3A4 4 0 0 1 13 3V5" fill="none" stroke="#fff" stroke-width="1.5"/><path d="M0 5H18V21H0Z" fill="#fff"/><path d="M4 9H8.5V13H4Z M9.5 9H14V13H9.5Z M4 14H8.5V18H4Z M9.5 14H14V18H9.5Z" fill="#222"/></svg>
<!-- sticky -->
<svg style="left:271px;top:648px" width="16" height="17" viewBox="0 0 16 17"><path d="M0 0H16V11L11 17H0Z" fill="#f1e38a"/><path d="M16 11H11V17Z" fill="#8c7d3a"/></svg>
<!-- corel -->
<svg style="left:312px;top:647px" width="21" height="21" viewBox="0 0 21 21"><rect width="21" height="21" fill="#5fae48"/><path d="M2 19L10 3L13 6Z M4 18L18 5L19 8Z M3 19L16 14L15 17Z" fill="#c8e8b0" opacity="0.85"/><path d="M2 19L6 12L9 15Z" fill="#2a5a20"/></svg>
<!-- green triangle -->
<svg style="left:355px;top:647px" width="21" height="20" viewBox="0 0 21 20"><path d="M10.5 0L21 20H0Z" fill="#24b04a"/><path d="M10.5 7L15 16H6Z" fill="#1b1b1b"/><path d="M10.5 0L15 8.5L12.5 13L10.5 9Z" fill="#5ad05a"/></svg>
<!-- ppt -->
<svg style="left:398px;top:648px" width="22" height="19" viewBox="0 0 22 19"><rect x="9" y="2" width="13" height="15" fill="#fff"/><path d="M12 6H19M12 9H19M12 12H19" stroke="#d24726" stroke-width="1.3"/><path d="M0 2L12 0V19L0 17Z" fill="#d24726"/><path d="M3 14V5H6.5A2.5 2.5 0 0 1 6.5 10H4.5" fill="none" stroke="#fff" stroke-width="1.6"/></svg>
<!-- groove circle -->
<svg style="left:441px;top:648px" width="21" height="19" viewBox="0 0 21 19"><circle cx="10.5" cy="9.5" r="8" fill="none" stroke="#fff" stroke-width="2.2"/><circle cx="10.5" cy="9.5" r="3" fill="none" stroke="#fff" stroke-width="2.2"/><path d="M14 0L18 3" stroke="#1b1b1b" stroke-width="2.5"/></svg>
<!-- access -->
<svg style="left:484px;top:648px" width="21" height="19" viewBox="0 0 21 19"><rect x="10" y="3" width="10" height="13" rx="2" fill="#fff"/><path d="M11 7H19M11 10H19M11 13H19" stroke="#a4373a" stroke-width="1.2"/><path d="M0 2L12 0V19L0 17Z" fill="#a4373a"/><path d="M2.5 14.5L6 4L9.5 14.5M3.8 11H8.2" fill="none" stroke="#fff" stroke-width="1.7"/></svg>
<!-- paint -->
<svg style="left:527px;top:647px" width="22" height="21" viewBox="0 0 22 21"><ellipse cx="9" cy="12" rx="9" ry="7.5" fill="#e8ecf0"/><circle cx="5" cy="10" r="1.7" fill="#e04040"/><circle cx="9" cy="8" r="1.7" fill="#f0c020"/><circle cx="13" cy="9" r="1.7" fill="#40a040"/><circle cx="5" cy="14.5" r="1.7" fill="#3080e0"/><path d="M10 16L20 2L22 3L12 17Z" fill="#c08040"/><path d="M19 0L22 2L21 4L18 2Z" fill="#f0d090"/></svg>
<!-- underline bars -->
<div class="a" style="left:176px;top:673px;width:35px;height:2px;background:#d3e4bd"></div>
<div class="a" style="left:349px;top:673px;width:35px;height:2px;background:#d3e4bd"></div>
<div class="a" style="left:391px;top:673px;width:35px;height:2px;background:#d3e4bd"></div>
<div class="a" style="left:433px;top:673px;width:35px;height:2px;background:#d3e4bd"></div>
<div class="a" style="left:474px;top:673px;width:42px;height:2px;background:#d3e4bd"></div>
<div class="a" style="left:520px;top:673px;width:35px;height:2px;background:#d3e4bd"></div>
<!-- tray -->
<svg style="left:1012px;top:654px" width="12" height="7" viewBox="0 0 12 7"><path d="M0.8 6.2L6 1L11.2 6.2" fill="none" stroke="#fff" stroke-width="1.2"/></svg>
<svg style="left:1032px;top:654px" width="15" height="8" viewBox="0 0 15 8"><rect x="0.6" y="0.6" width="12.5" height="6.8" fill="none" stroke="#fff" stroke-width="1.1"/><rect x="2" y="2" width="6" height="4" fill="#fff"/><rect x="13.5" y="2.5" width="1.5" height="3" fill="#fff"/></svg>
<svg style="left:1053px;top:651px" width="15" height="13" viewBox="0 0 15 13"><path d="M0 2H4M2 0V4M0.5 0.5L3.5 3.5M3.5 0.5L0.5 3.5" stroke="#fff" stroke-width="0.8"/><path d="M4 12A9 9 0 0 1 13 3M6.5 12A6.5 6.5 0 0 1 13 5.5M9 12A4 4 0 0 1 13 8" fill="none" stroke="#888" stroke-width="1"/><circle cx="12" cy="11.5" r="1" fill="#fff"/></svg>
<svg style="left:1074px;top:651px" width="15" height="13" viewBox="0 0 15 13"><path d="M0.6 4.5H3.5L7.5 0.8V12.2L3.5 8.5H0.6Z" fill="none" stroke="#fff" stroke-width="1.1"/><path d="M9.5 4A3 3 0 0 1 9.5 9M11.5 2.5A5.5 5.5 0 0 1 11.5 10.5" fill="none" stroke="#fff" stroke-width="1.1"/></svg>
<div class="a" style="left:1110px;top:643px;font-size:10.5px;line-height:12px;color:#fff">21.43</div>
<div class="a" style="left:1097px;top:659px;font-size:10.5px;line-height:12px;color:#fff">23/04/2017</div>
<svg style="left:1164px;top:650px" width="14" height="14" viewBox="0 0 14 14"><path d="M0.6 0.6H13.4V9.4H8.5L7 12L5.5 9.4H0.6Z" fill="none" stroke="#fff" stroke-width="1.1"/></svg>
<div class="a" style="left:1195px;top:640px;width:1px;height:35px;background:#5a5a5a"></div>

</body></html>
